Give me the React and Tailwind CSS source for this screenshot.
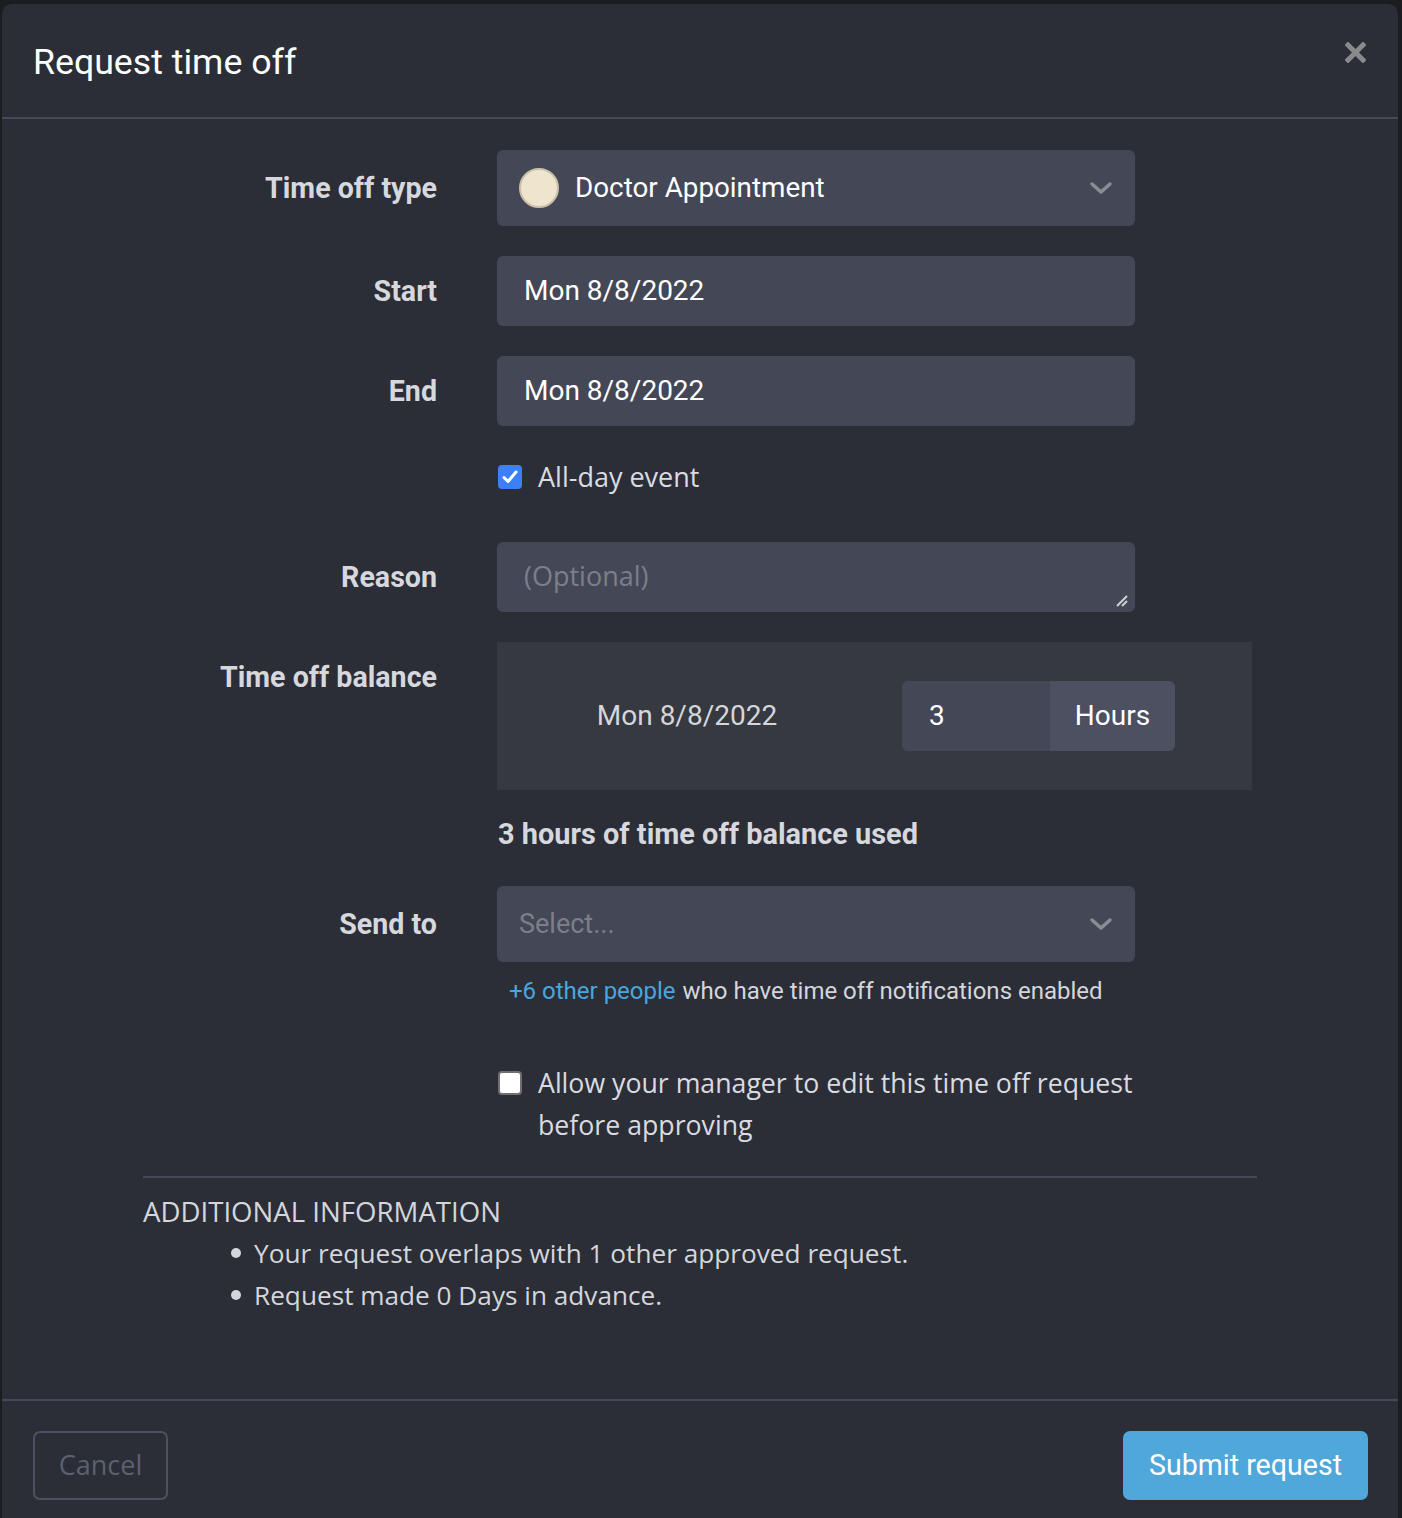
import React from "react";

const roboto = { fontFamily: "Roboto, 'Liberation Sans', sans-serif" };
const plex = { fontFamily: "'Open Sans', 'Noto Sans', sans-serif" };

function Chevron() {
  return (
    <svg width="24" height="16" viewBox="0 0 24 16" fill="none">
      <path d="M3 4 L12 12 L21 4" stroke="#8b8d95" strokeWidth="3.5" strokeLinecap="round" strokeLinejoin="round" />
    </svg>
  );
}

function Checkbox({ checked }) {
  if (checked) {
    return (
      <div className="w-[24px] h-[24px] rounded-[4px] bg-[#3b80f6] flex items-center justify-center shrink-0">
        <svg width="16" height="14" viewBox="0 0 16 14" fill="none">
          <path d="M2 7.5 L6 11.5 L14 2" stroke="#fff" strokeWidth="3" strokeLinecap="round" strokeLinejoin="round" />
        </svg>
      </div>
    );
  }
  return <div className="w-[24px] h-[24px] rounded-[4px] bg-white border-2 border-[#707070] shrink-0" />;
}

function Row({ label, children, top }) {
  return (
    <div className={`flex ${top ? "items-start" : "items-center"}`}>
      <div
        className="w-[294px] text-right text-[28.6px] font-bold text-[#d6d8de] h-[70px] flex items-center justify-end shrink-0"
        style={roboto}
      >
        {label}
      </div>
      <div className="ml-[60px] flex-1">{children}</div>
    </div>
  );
}

export default function App() {
  return (
    <div className="min-h-[1518px] bg-[#1c1d21] pt-[4px] pl-[2px] overflow-hidden">
      <div className="w-[1396px] h-[1514px] bg-[#2b2e36] rounded-t-[10px]">
        {/* header */}
        <div className="h-[115px] flex items-start justify-between pl-[31px] pr-[32px] border-b-2 border-[#464955]">
          <h1 className="text-[35.7px] text-white mt-[36px] leading-[44px]" style={roboto}>
            Request time off
          </h1>
          <button className="mt-[38px] w-[21px] h-[21px]">
            <svg width="21" height="21" viewBox="0 0 21 21">
              <path d="M3 3 L18 18 M18 3 L3 18" stroke="#8a8a8c" strokeWidth="5" strokeLinecap="square" />
            </svg>
          </button>
        </div>

        {/* body */}
        <div className="px-[141px] pt-[31px] pb-[83px] border-b-2 border-[#464955]">
          <Row label="Time off type">
            <div className="w-[638px] h-[76px] rounded-[6px] bg-[#444756] flex items-center pl-[22px] pr-[22px]">
              <div className="w-[40px] h-[40px] rounded-full bg-[#efe5cf] border-2 border-[#c9c0a9]" />
              <span className="ml-[16px] text-[27.8px] text-white flex-1" style={roboto}>
                Doctor Appointment
              </span>
              <Chevron />
            </div>
          </Row>

          <div className="mt-[30px]">
            <Row label="Start">
              <div className="w-[638px] h-[70px] rounded-[6px] bg-[#444756] flex items-center pl-[27px] text-[28px] text-white" style={roboto}>
                Mon 8/8/2022
              </div>
            </Row>
          </div>

          <div className="mt-[30px]">
            <Row label="End">
              <div className="w-[638px] h-[70px] rounded-[6px] bg-[#444756] flex items-center pl-[27px] text-[28px] text-white" style={roboto}>
                Mon 8/8/2022
              </div>
            </Row>
          </div>

          <div className="mt-[30px] ml-[355px] h-[42px] flex items-center">
            <Checkbox checked />
            <span className="ml-[16px] text-[27px] text-[#d9dbe1]" style={plex}>
              All-day event
            </span>
          </div>

          <div className="mt-[44px]">
            <Row label="Reason">
              <div className="relative w-[638px] h-[70px]">
                <textarea
                  placeholder="(Optional)"
                  className="w-full h-full rounded-[6px] bg-[#444756] pl-[27px] pt-[14px] text-[27px] leading-[40px] text-white placeholder:text-[#7c7f8a] resize-none outline-none"
                  style={plex}
                />
                <svg className="absolute right-[6px] bottom-[4px]" width="14" height="14" viewBox="0 0 14 14">
                  <path d="M2 12 L12 2 M7 12 L12 7" stroke="#d0d0d0" strokeWidth="2" />
                </svg>
              </div>
            </Row>
          </div>

          <div className="mt-[30px]">
            <Row label="Time off balance" top>
              <div className="w-[755px] h-[148px] bg-[#363940] flex items-center">
                <div className="w-[380px] text-center text-[28px] text-[#d4d6dc]" style={roboto}>
                  Mon 8/8/2022
                </div>
                <div className="ml-[25px] flex h-[70px] rounded-[6px] overflow-hidden">
                  <div className="w-[148px] bg-[#444756] flex items-center pl-[27px] text-[28px] text-white" style={roboto}>
                    3
                  </div>
                  <div className="w-[125px] bg-[#4d5061] flex items-center justify-center text-[28px] text-white" style={roboto}>
                    Hours
                  </div>
                </div>
              </div>
            </Row>
          </div>

          <div className="mt-[24px] ml-[355px] h-[42px] flex items-center text-[28.9px] font-bold text-[#d6d8de]" style={roboto}>
            3 hours of time off balance used
          </div>

          <div className="mt-[30px]">
            <Row label="Send to">
              <div className="w-[638px] h-[76px] rounded-[6px] bg-[#444756] flex items-center pl-[22px] pr-[22px]">
                <span className="text-[27px] text-[#7c7f8a] flex-1" style={roboto}>
                  Select...
                </span>
                <Chevron />
              </div>
            </Row>
          </div>

          <div className="mt-[14px] ml-[366px] h-[30px] flex items-center text-[24px] text-[#d4d6dc]" style={roboto}>
            <span className="text-[#4aa6dc]">+6 other people</span>
            <span className="ml-[7px]">who have time off notifications enabled</span>
          </div>

          <div className="mt-[56px] ml-[355px] flex items-start">
            <div className="mt-[9px]">
              <Checkbox />
            </div>
            <p className="ml-[16px] w-[620px] text-[26.7px] leading-[42px] text-[#d9dbe1]" style={plex}>
              Allow your manager to edit this time off request before approving
            </p>
          </div>

          <div className="mt-[30px] border-t-2 border-[#464955]" />

          <div className="mt-[12px] text-[27.6px] leading-[42px] text-[#d4d6dc]" style={plex}>
            ADDITIONAL INFORMATION
          </div>
          <ul className="pl-[111px] text-[26.2px] leading-[42px] text-[#d4d6dc]" style={plex}>
            <li className="flex items-center">
              <span className="w-[10px] h-[10px] rounded-full bg-[#d4d6dc] mr-[13px] -ml-[23px]" />
              Your request overlaps with 1 other approved request.
            </li>
            <li className="flex items-center">
              <span className="w-[10px] h-[10px] rounded-full bg-[#d4d6dc] mr-[13px] -ml-[23px]" />
              Request made 0 Days in advance.
            </li>
          </ul>
        </div>

        {/* footer */}
        <div className="pt-[30px] pl-[31px] pr-[30px] flex justify-between">
          <button className="w-[135px] h-[69px] rounded-[7px] border-2 border-[#4d5060] text-[27px] text-[#5c606f]" style={plex}>
            Cancel
          </button>
          <button className="w-[245px] h-[69px] rounded-[7px] bg-[#4fa7da] text-[28.6px] text-white" style={roboto}>
            Submit request
          </button>
        </div>
      </div>
    </div>
  );
}
